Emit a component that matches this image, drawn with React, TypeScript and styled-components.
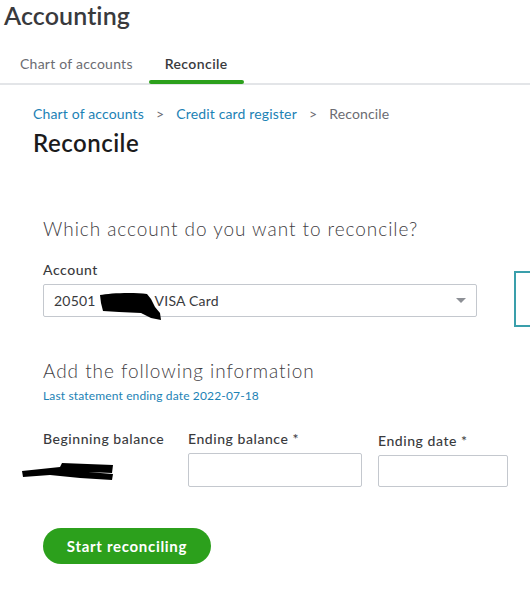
import React from "react";
import styled, { createGlobalStyle } from "styled-components";

const Global = createGlobalStyle`
  html, body { margin: 0; padding: 0; background: #fff; }
  body { font-family: "Lato", "Open Sans", sans-serif; color: #393a3d; overflow: hidden; }
  * { box-sizing: border-box; }
`;

const Page = styled.div`
  width: 530px;
  height: 591px;
  overflow: hidden;
`;

const Header = styled.header`
  padding-left: 4px;
`;

const Title = styled.h1`
  margin: 0;
  font-size: 25px;
  line-height: 30px;
  font-weight: 600;
  color: #393a3d;
  letter-spacing: 0.1px;
`;

const TabBar = styled.nav`
  display: flex;
  margin-top: 14px;
  margin-left: -4px;
  padding-left: 4px;
  border-bottom: 2px solid #e3e5e8;
`;

const Tab = styled.div<{ $active?: boolean }>`
  position: relative;
  height: 39px;
  line-height: 39px;
  padding: 0 16px;
  font-size: 14px;
  letter-spacing: ${(p) => (p.$active ? "0.4px" : "0.25px")};
  color: ${(p) => (p.$active ? "#393a3d" : "#6b6c72")};
  font-weight: ${(p) => (p.$active ? 600 : 400)};
  &::after {
    content: "";
    display: ${(p) => (p.$active ? "block" : "none")};
    position: absolute;
    left: 0;
    right: 0;
    bottom: -1px;
    height: 4px;
    border-radius: 2px;
    background: #2ca01c;
  }
`;

const Content = styled.main`
  padding-left: 33px;
`;

const Breadcrumb = styled.div`
  margin-top: 19px;
  display: flex;
  gap: 12px;
  font-size: 14px;
  line-height: 20px;
  letter-spacing: 0.15px;
  color: #6b6c72;
`;

const Crumb = styled.span<{ $link?: boolean }>`
  color: ${(p) => (p.$link ? "#1c82b5" : "#6b6c72")};
`;

const PageTitle = styled.h2`
  margin: 4px 0 0;
  font-size: 24px;
  line-height: 30px;
  font-weight: 600;
  letter-spacing: 0.5px;
  color: #1b1b1c;
`;

const Form = styled.section`
  padding-left: 10px;
`;

const SectionTitle = styled.h3<{ $mt: number }>`
  margin: ${(p) => p.$mt}px 0 0;
  font-size: 19px;
  line-height: 26px;
  font-weight: 300;
  color: #3f4044;
  letter-spacing: 0.95px;
`;

const AccountRow = styled.div`
  display: flex;
  align-items: flex-start;
  margin-top: 19px;
`;

const Field = styled.div<{ $w: number; $mt?: number; $ml?: number }>`
  display: flex;
  flex-direction: column;
  width: ${(p) => p.$w}px;
  flex-shrink: 0;
  margin-top: ${(p) => p.$mt ?? 0}px;
  margin-left: ${(p) => p.$ml ?? 0}px;
`;

const Label = styled.label`
  font-size: 14px;
  line-height: 18px;
  font-weight: 500;
  letter-spacing: 0.55px;
  color: #393a3d;
`;

const Select = styled.div`
  margin-top: 5px;
  height: 33px;
  border: 1px solid #c4c8ce;
  border-radius: 2px;
  display: flex;
  align-items: center;
  padding: 0 10px;
  font-size: 14px;
  letter-spacing: 0.2px;
  color: #393a3d;
`;

const SelectText = styled.div`
  flex: 1;
  display: flex;
  align-items: center;
`;

const Redact = styled.svg`
  flex-shrink: 0;
  transform: translateY(5px);
  margin: 0 -6px 0 3px;
`;

const SidePanel = styled.div`
  margin-top: 10px;
  margin-left: 37px;
  width: 60px;
  height: 56px;
  flex-shrink: 0;
  border: 2px solid #3a9fab;
  border-right: none;
`;

const Hint = styled.div`
  margin-top: 4px;
  font-size: 12px;
  line-height: 16px;
  letter-spacing: 0.15px;
  color: #1c82b5;
`;

const FieldsRow = styled.div`
  display: flex;
  margin-top: 26px;
`;

const Input = styled.div<{ $h: number }>`
  margin-top: 5px;
  height: ${(p) => p.$h}px;
  border: 1px solid #c4c8ce;
  border-radius: 2px;
`;

const BalanceRedact = styled.svg`
  margin-top: 13px;
  margin-left: -23px;
`;

const Button = styled.button`
  margin-top: 41px;
  width: 168px;
  height: 36px;
  border: none;
  border-radius: 18px;
  background: #2ca01c;
  color: #fff;
  font-family: "Lato", "Open Sans", sans-serif;
  font-size: 15px;
  font-weight: 700;
  letter-spacing: 0.7px;
  cursor: pointer;
`;

const Caret = () => (
  <svg width="10" height="6" viewBox="0 0 10 6">
    <path d="M0 0 L10 0 L5 5 Z" fill="#8d9096" />
  </svg>
);

export default function App() {
  return (
    <Page>
      <Global />
      <Header>
        <Title>Accounting</Title>
        <TabBar>
          <Tab>Chart of accounts</Tab>
          <Tab $active>Reconcile</Tab>
        </TabBar>
      </Header>
      <Content>
        <Breadcrumb>
          <Crumb $link>Chart of accounts</Crumb>
          <Crumb>&gt;</Crumb>
          <Crumb $link>Credit card register</Crumb>
          <Crumb>&gt;</Crumb>
          <Crumb>Reconcile</Crumb>
        </Breadcrumb>
        <PageTitle>Reconcile</PageTitle>
        <Form>
          <SectionTitle $mt={58}>Which account do you want to reconcile?</SectionTitle>
          <AccountRow>
            <Field $w={434}>
              <Label>Account</Label>
              <Select>
                <SelectText>
                  <span>20501</span>
                  <Redact width="62" height="30" viewBox="0 0 62 30">
                    <path
                      d="M1 4 C10 2 35 1 48 3 L52 8 L56 16 L61 22 L62 29 L52 27 L42 22 L20 21 L4 20 L2 12 Z"
                      fill="#000"
                    />
                  </Redact>
                  <span>VISA Card</span>
                </SelectText>
                <Caret />
              </Select>
            </Field>
            <SidePanel />
          </AccountRow>
          <SectionTitle $mt={31}>Add the following information</SectionTitle>
          <Hint>Last statement ending date 2022-07-18</Hint>
          <FieldsRow>
            <Field $w={145}>
              <Label>Beginning balance</Label>
              <BalanceRedact width="94" height="20" viewBox="0 0 94 20">
                <path
                  d="M2 10 L40 6 L42 2 L93 4 L92 12 L68 11 L93 13 L92 19 L60 17 L30 14 L3 16 Z"
                  fill="#000"
                />
              </BalanceRedact>
            </Field>
            <Field $w={174}>
              <Label>Ending balance *</Label>
              <Input $h={34} />
            </Field>
            <Field $w={130} $mt={2} $ml={16}>
              <Label>Ending date *</Label>
              <Input $h={32} />
            </Field>
          </FieldsRow>
          <Button>Start reconciling</Button>
        </Form>
      </Content>
    </Page>
  );
}
